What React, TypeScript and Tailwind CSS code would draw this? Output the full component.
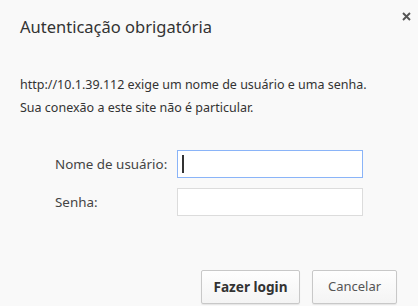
import React from "react";

export default function App() {
  return (
    <div
      className="relative w-[418px] h-[306px] bg-[#f9f9f9] text-[#333]"
      style={{ fontFamily: '"Noto Sans", "Open Sans", sans-serif' }}
    >
      <button className="absolute right-[5px] top-[9px] w-[14px] h-[14px] flex items-center justify-center">
        <svg width="9" height="9" viewBox="0 0 9 9">
          <path d="M1 1 L8 8 M8 1 L1 8" stroke="#555" strokeWidth="1.9" />
        </svg>
      </button>
      <div className="flex flex-col pl-[20px] pt-[16px]">
        <div className="text-[16.5px] leading-[22px] text-[#333]">Autenticação obrigatória</div>
        <div className="mt-[38px] text-[12.5px] leading-[18px] text-[#333]">
          http://10.1.39.112 exige um nome de usuário e uma senha.
        </div>
        <div className="mt-[5px] text-[12.5px] leading-[18px] text-[#333]">
          Sua conexão a este site não é particular.
        </div>
        <div className="mt-[33px] grid grid-cols-[122px_186px] gap-y-[10px] items-center ml-[35px] w-fit">
          <div className="text-[13.4px] text-[#444]">Nome de usuário:</div>
          <div className="h-[28px] border border-[#8ab4f8] bg-white flex items-center pl-[4px]">
            <div className="w-[1.5px] h-[18px] bg-[#333]" />
          </div>
          <div className="text-[13.4px] text-[#444]">Senha:</div>
          <div className="h-[28px] border border-[#dcdcdc] bg-white" />
        </div>
        <div className="mt-[54px] flex justify-end gap-[12px] pr-[21px]">
          <button className="w-[99px] h-[34px] border border-[#c8c8c8] rounded-[2px] bg-gradient-to-b from-[#fefefe] to-[#f4f4f4] text-[13.6px] font-bold text-[#333] shadow-[0_1px_1px_rgba(0,0,0,0.08)]">
            Fazer login
          </button>
          <button className="w-[85px] h-[34px] border border-[#c8c8c8] rounded-[2px] bg-gradient-to-b from-[#fefefe] to-[#f4f4f4] text-[13px] text-[#555] shadow-[0_1px_1px_rgba(0,0,0,0.08)]">
            Cancelar
          </button>
        </div>
      </div>
    </div>
  );
}
